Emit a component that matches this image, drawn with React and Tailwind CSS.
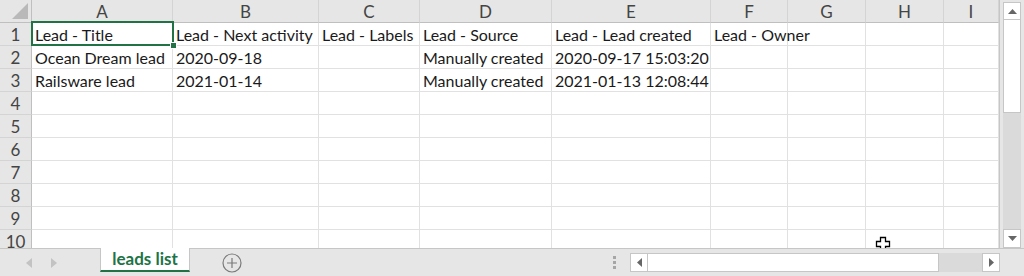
import React from "react";

const cols = [
  { l: "A", w: 141 },
  { l: "B", w: 146 },
  { l: "C", w: 101 },
  { l: "D", w: 132 },
  { l: "E", w: 159 },
  { l: "F", w: 77 },
  { l: "G", w: 78 },
  { l: "H", w: 78 },
  { l: "I", w: 55 },
];

const data = [
  ["Lead - Title", "Lead - Next activity", "Lead - Labels", "Lead - Source", "Lead - Lead created", "Lead - Owner", "", "", ""],
  ["Ocean Dream lead", "2020-09-18", "", "Manually created", "2020-09-17 15:03:20", "", "", "", ""],
  ["Railsware lead", "2021-01-14", "", "Manually created", "2021-01-13 12:08:44", "", "", "", ""],
];

const font = { fontFamily: "Lato, 'Open Sans', sans-serif" };

export default function App() {
  const rows = [];
  for (let r = 1; r <= 10; r++) rows.push(r);
  return (
    <div className="w-[1024px] h-[276px] flex flex-col bg-[#e6e6e6] overflow-hidden" style={font}>
      <div className="flex h-[248px]">
        {/* grid */}
        <div className="relative w-[1000px] h-[248px] overflow-hidden bg-white border-r border-[#c6c6c6]">
          <div className="grid grid-cols-[32px_141px_146px_101px_132px_159px_77px_78px_78px_55px] auto-rows-[23px]">
            <div className="relative bg-[#e6e6e6] border-r border-b border-[#bfbfbf]">
              <svg className="absolute right-[3px] bottom-[3px]" width="16" height="16" viewBox="0 0 16 16">
                <polygon points="16,0 16,16 0,16" fill="#b9b9b9" />
              </svg>
            </div>
            {cols.map((c) => (
              <div
                key={c.l}
                className="bg-[#e6e6e6] border-r border-[#d4d4d4] border-b border-b-[#bfbfbf] flex items-center justify-center pt-[1px] text-[17px] text-[#444]"
              >
                {c.l}
              </div>
            ))}
            {rows.map((r) => (
              <React.Fragment key={r}>
                <div className="bg-[#e6e6e6] border-r border-[#bfbfbf] border-b border-b-[#d4d4d4] flex items-center justify-center pt-[2px] text-[17px] text-[#444]">
                  {r}
                </div>
                {cols.map((c, ci) => (
                  <div
                    key={c.l}
                    className="border-r border-b border-[#e1e1e1] pl-[3px] pt-[2px] flex items-center text-[16px] text-[#1a1a1a] whitespace-nowrap overflow-visible"
                  >
                    {data[r - 1] ? data[r - 1][ci] : ""}
                  </div>
                ))}
              </React.Fragment>
            ))}
          </div>
          {/* selection */}
          <div className="absolute left-[31px] top-[21px] w-[143px] h-[25px] border-2 border-[#217346]">
            <div className="absolute right-[-5px] bottom-[-5px] w-[7px] h-[7px] bg-[#217346] border border-white" />
          </div>
          {/* cursor */}
          <svg className="absolute left-[875px] top-[236px]" width="16" height="16" viewBox="0 0 16 16">
            <path d="M5.5 1.5h5v4h4v5h-4v4h-5v-4h-4v-5h4z" fill="#fff" stroke="#000" strokeWidth="1.3" />
          </svg>
        </div>
        {/* vertical scrollbar */}
        <div className="w-[24px] h-[248px] pl-[3px] pr-[3px] pt-[2px]">
          <div className="h-[246px] bg-[#dadada] flex flex-col justify-between">
            <div className="flex flex-col">
              <div className="h-[18px] bg-white border border-[#c6c6c6] flex items-center justify-center">
                <svg width="9" height="5" viewBox="0 0 9 5"><polygon points="0,5 9,5 4.5,0" fill="#666" /></svg>
              </div>
              <div className="h-[93px] bg-white border border-t-0 border-[#c6c6c6]" />
            </div>
            <div className="h-[19px] bg-white border border-[#c6c6c6] flex items-center justify-center">
              <svg width="9" height="5" viewBox="0 0 9 5"><polygon points="0,0 9,0 4.5,5" fill="#666" /></svg>
            </div>
          </div>
        </div>
      </div>
      {/* bottom bar */}
      <div className="flex h-[28px] border-t border-[#c6c6c6]">
        <div className="w-[100px] flex items-center pl-[26px] gap-[19px]">
          <svg width="6" height="10" viewBox="0 0 6 10"><polygon points="6,0 6,10 0,5" fill="#c3c3c3" /></svg>
          <svg width="6" height="10" viewBox="0 0 6 10"><polygon points="0,0 0,10 6,5" fill="#c3c3c3" /></svg>
        </div>
        <div className="w-[90px] h-[24px] -mt-px bg-white border-x border-[#c6c6c6] border-b-2 border-b-[#217346] flex items-center justify-center text-[17px] font-bold text-[#217346]">
          leads list
        </div>
        <div className="w-[84px] flex items-center pl-[32px]">
          <svg width="20" height="20" viewBox="0 0 20 20">
            <circle cx="10" cy="10" r="9" fill="none" stroke="#7a7a7a" strokeWidth="1.2" />
            <path d="M10 5v10M5 10h10" stroke="#7a7a7a" strokeWidth="1.2" />
          </svg>
        </div>
        <div className="flex-1 flex items-start justify-end pt-[6px]">
          <div className="flex flex-col gap-[2px] mr-[14px] mt-[1px]">
            <div className="w-[3px] h-[3px] bg-[#a6a6a6]" />
            <div className="w-[3px] h-[3px] bg-[#a6a6a6]" />
            <div className="w-[3px] h-[3px] bg-[#a6a6a6]" />
          </div>
        </div>
        <div className="w-[370px] pt-[4px] mr-[24px]">
          <div className="h-[19px] flex bg-[#dadada]">
            <div className="w-[18px] bg-white border border-[#c6c6c6] flex items-center justify-center">
              <svg width="5" height="9" viewBox="0 0 5 9"><polygon points="5,0 5,9 0,4.5" fill="#666" /></svg>
            </div>
            <div className="w-[291px] bg-white border-y border-r border-[#c6c6c6]" />
            <div className="flex-1" />
            <div className="w-[18px] bg-white border border-[#c6c6c6] flex items-center justify-center">
              <svg width="5" height="9" viewBox="0 0 5 9"><polygon points="0,0 0,9 5,4.5" fill="#666" /></svg>
            </div>
          </div>
        </div>
      </div>
    </div>
  );
}
